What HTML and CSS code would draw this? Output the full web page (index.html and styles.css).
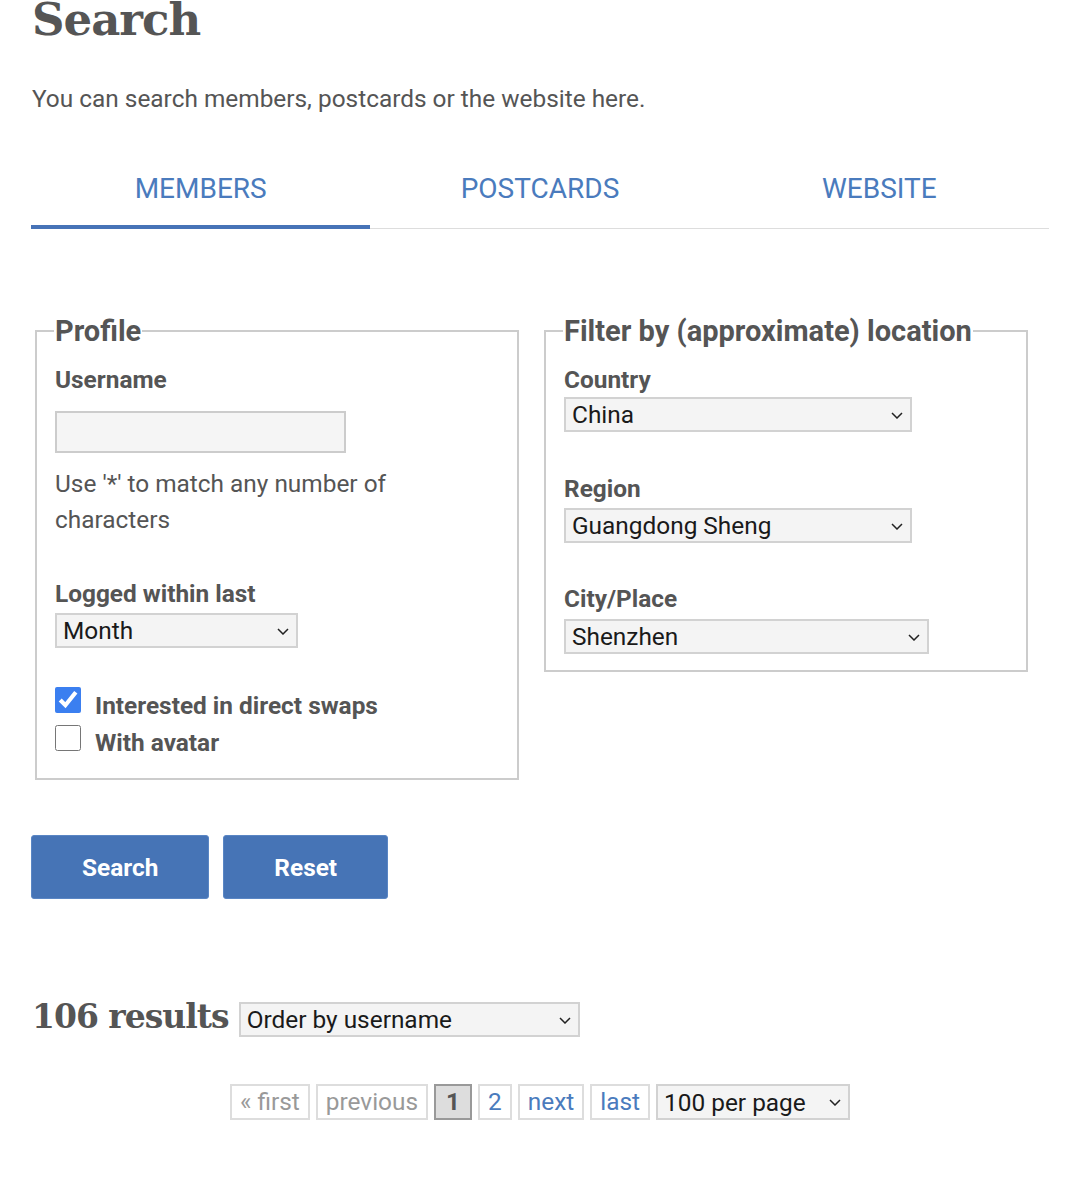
FILE: index.html
```html
<!DOCTYPE html>
<html lang="en">
<head>
<meta charset="utf-8">
<title>Search</title>
<link rel="stylesheet" href="styles.css">
</head>
<body>
<main class="page">
  <h1 class="title">Search</h1>
  <p class="intro">You can search members, postcards or the website here.</p>

  <nav class="tabs">
    <a class="tab active" href="#">MEMBERS</a>
    <a class="tab" href="#">POSTCARDS</a>
    <a class="tab" href="#">WEBSITE</a>
  </nav>

  <form class="search-form">
    <div class="fieldsets">
      <fieldset class="box box-profile">
        <legend>Profile</legend>
        <label class="lbl lbl-first" for="username">Username</label>
        <input class="text-input" id="username" type="text">
        <p class="help">Use '*' to match any number of characters</p>
        <label class="lbl lbl-logged" for="logged">Logged within last</label>
        <span class="sel-wrap w-logged">
          <select class="sel" id="logged"><option>Month</option></select>
          <svg class="chev" viewBox="0 0 12 7" width="12" height="7"><path d="M1 1 L6 6 L11 1"/></svg>
        </span>
        <div class="checks">
          <label class="check"><input type="checkbox" checked><span>Interested in direct swaps</span></label>
          <label class="check"><input type="checkbox"><span>With avatar</span></label>
        </div>
      </fieldset>

      <fieldset class="box box-location">
        <legend>Filter by (approximate) location</legend>
        <label class="lbl lbl-first" for="country">Country</label>
        <span class="sel-wrap w-country">
          <select class="sel" id="country"><option>China</option></select>
          <svg class="chev" viewBox="0 0 12 7" width="12" height="7"><path d="M1 1 L6 6 L11 1"/></svg>
        </span>
        <label class="lbl lbl-region" for="region">Region</label>
        <span class="sel-wrap w-region">
          <select class="sel" id="region"><option>Guangdong Sheng</option></select>
          <svg class="chev" viewBox="0 0 12 7" width="12" height="7"><path d="M1 1 L6 6 L11 1"/></svg>
        </span>
        <label class="lbl lbl-city" for="city">City/Place</label>
        <span class="sel-wrap w-city">
          <select class="sel" id="city"><option>Shenzhen</option></select>
          <svg class="chev" viewBox="0 0 12 7" width="12" height="7"><path d="M1 1 L6 6 L11 1"/></svg>
        </span>
      </fieldset>
    </div>

    <div class="buttons">
      <button class="btn" type="button">Search</button>
      <button class="btn" type="button">Reset</button>
    </div>
  </form>

  <div class="results">
    <h2 class="count">106 results</h2>
    <span class="sel-wrap w-order">
      <select class="sel"><option>Order by username</option></select>
      <svg class="chev" viewBox="0 0 12 7" width="12" height="7"><path d="M1 1 L6 6 L11 1"/></svg>
    </span>
  </div>

  <div class="pager">
    <span class="pg disabled">« first</span>
    <span class="pg disabled">previous</span>
    <span class="pg current">1</span>
    <a class="pg" href="#">2</a>
    <a class="pg" href="#">next</a>
    <a class="pg" href="#">last</a>
    <span class="sel-wrap w-per">
      <select class="sel"><option>100 per page</option></select>
      <svg class="chev" viewBox="0 0 12 7" width="12" height="7"><path d="M1 1 L6 6 L11 1"/></svg>
    </span>
  </div>
</main>
</body>
</html>
```

FILE: styles.css
```css
html, body {
  margin: 0;
  padding: 0;
  background: #fff;
}

body {
  font-family: Roboto, "Liberation Sans", sans-serif;
  color: #555;
}

.page {
  padding: 0 30px 0 31px;
}

.title {
  font-family: "DejaVu Serif", "Liberation Serif", serif;
  font-weight: bold;
  font-size: 45px;
  line-height: 48px;
  margin: -4px 0 0 1px;
  color: #555;
  letter-spacing: -1px;
}

.intro {
  font-size: 24.4px;
  line-height: 32px;
  margin: 39px 0 0 1px;
  color: #555;
}

.tabs {
  display: grid;
  grid-template-columns: repeat(3, 1fr);
  margin-top: 51px;
  border-bottom: 1px solid #ddd;
}

.tab {
  text-align: center;
  font-size: 28px;
  line-height: 30px;
  color: #4a7bbd;
  text-decoration: none;
  padding: 8px 0 21px;
  border-bottom: 4px solid transparent;
  margin-bottom: -1px;
}

.tab.active {
  border-bottom-color: #4773b7;
}

.search-form {
  margin-top: 85px;
}

.fieldsets {
  display: grid;
  grid-template-columns: 484px 484px;
  column-gap: 25px;
  align-items: start;
  padding-left: 4px;
}

.box {
  margin: 0;
  border: 2px solid #ccc;
  padding: 0 18px;
  display: flex;
  flex-direction: column;
  align-items: flex-start;
  min-width: 0;
}

.box legend {
  font-size: 29px;
  font-weight: bold;
  line-height: 34px;
  padding: 0 1px;
  margin-left: -1px;
  color: #555;
}

.lbl {
  font-size: 24.4px;
  font-weight: bold;
  line-height: 30px;
  color: #555;
}

.lbl-first {
  margin-top: 17px;
}

.text-input {
  margin-top: 16px;
  width: 291px;
  height: 42px;
  box-sizing: border-box;
  border: 2px solid #ccc;
  background: #f5f5f5;
  font-size: 24px;
  padding: 0 8px;
}

.help {
  font-size: 24.4px;
  line-height: 36px;
  margin: 13px 0 0;
  width: 380px;
  color: #555;
}

.lbl-logged {
  margin-top: 41px;
}

.sel-wrap {
  position: relative;
  display: inline-block;
}

.sel {
  display: block;
  width: 100%;
  appearance: none;
  -webkit-appearance: none;
  font-family: Roboto, "Liberation Sans", sans-serif;
  font-size: 24.4px;
  color: #1a1a1a;
  background-color: #f4f4f4;
  border: 2px solid #d2d2d2;
  border-radius: 0;
  height: 35px;
  box-sizing: border-box;
  padding: 0 30px 0 6px;
  margin: 0;
}

.chev {
  position: absolute;
  right: 9px;
  top: 50%;
  margin-top: -3px;
  fill: none;
  stroke: #222;
  stroke-width: 1.5;
  pointer-events: none;
}

.w-logged {
  margin-top: 4px;
  width: 243px;
}

.checks {
  margin-top: 39px;
  margin-bottom: 27px;
  display: flex;
  flex-direction: column;
  gap: 12px;
}

.check {
  display: flex;
  align-items: center;
  gap: 14px;
  font-size: 24.4px;
  font-weight: bold;
  line-height: 26px;
  color: #555;
}

.check input {
  margin: 0;
  width: 26px;
  height: 26px;
  accent-color: #3b7ff0;
}

.check span {
  position: relative;
  top: 6px;
}

.check + .check span {
  top: 5px;
}

.w-country {
  margin-top: 2px;
  width: 348px;
}

.lbl-region {
  margin-top: 42px;
}

.w-region {
  margin-top: 4px;
  width: 348px;
}

.lbl-city {
  margin-top: 41px;
}

.w-city {
  margin-top: 5px;
  width: 365px;
  margin-bottom: 16px;
}

.buttons {
  display: flex;
  gap: 14px;
  margin-top: 55px;
}

.btn {
  height: 64px;
  padding: 0 50px;
  background: #4674b6;
  color: #fff;
  border: 1px solid #5a86c4;
  border-radius: 3px;
  font-family: Roboto, "Liberation Sans", sans-serif;
  font-size: 24.4px;
  font-weight: bold;
}

.results {
  display: flex;
  align-items: center;
  gap: 10px;
  margin-top: 97px;
}

.count {
  font-family: "DejaVu Serif", "Liberation Serif", serif;
  font-weight: bold;
  font-size: 33px;
  line-height: 40px;
  margin: 0 0 0 1px;
  color: #555;
  letter-spacing: -1px;
}

.w-order {
  width: 341px;
  margin-top: 6px;
}

.pager {
  display: flex;
  justify-content: center;
  align-items: center;
  gap: 6px;
  margin-top: 47px;
}

.pg {
  display: block;
  height: 36px;
  box-sizing: border-box;
  border: 2px solid #ddd;
  padding: 0 8px;
  font-size: 24.4px;
  line-height: 32px;
  color: #4a7bbd;
  text-decoration: none;
}

.pg.disabled {
  color: #999;
}

.pg.current {
  background: #ddd;
  border-color: #999;
  color: #555;
  font-weight: bold;
  padding: 0 10px;
}

.w-per {
  width: 194px;
}

.w-per .sel {
  height: 36px;
}
```
